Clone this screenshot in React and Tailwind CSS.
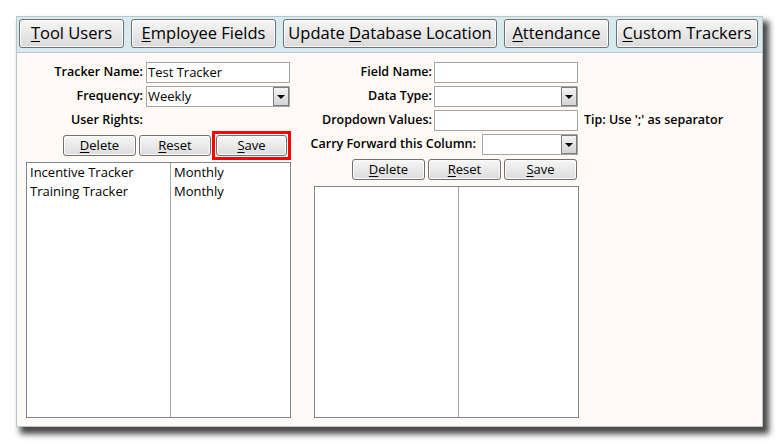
const tabs = [
  { key: 'T', rest: 'ool Users', w: 'w-[105px]' },
  { key: 'E', rest: 'mployee Fields', w: 'w-[145px]' },
  { pre: 'Update ', key: 'D', rest: 'atabase Location', w: 'w-[214px]' },
  { key: 'A', rest: 'ttendance', w: 'w-[105px]' },
  { key: 'C', rest: 'ustom Trackers', w: 'w-[142px]' },
]

function Btn({ k, rest, className = '' }) {
  return (
    <button
      className={`h-[21px] flex items-center justify-center rounded-[3px] border border-[#707070] bg-gradient-to-b from-[#f7f7f7] to-[#dcdcdc] shadow-[inset_0_0_0_1px_#fbfbfb] text-[13px] text-black ${className}`}
    >
      <span>
        <span className="underline underline-offset-2">{k}</span>
        {rest}
      </span>
    </button>
  )
}

function Input({ w = 'w-[144px]', value }) {
  return (
    <div className={`${w} h-[21px] bg-white border border-[#a5a5a5] flex items-center pl-[1px] text-[13px] text-black`}>
      {value}
    </div>
  )
}

function Select({ w = 'w-[144px]', value }) {
  return (
    <div className={`${w} h-[21px] bg-white border border-[#a5a5a5] flex items-center text-[13px] text-black`}>
      <span className="flex-1 pl-[1px]">{value}</span>
      <span className="w-[16px] h-full flex items-center justify-center border border-[#7d7d7d] bg-gradient-to-b from-[#f3f3f3] to-[#d4d4d4]">
        <span className="w-0 h-0 border-l-[4px] border-r-[4px] border-t-[4px] border-l-transparent border-r-transparent border-t-black" />
      </span>
    </div>
  )
}

function Label({ children, className = '' }) {
  return <span className={`text-[12.5px] font-semibold text-black whitespace-nowrap ${className}`}>{children}</span>
}

function ListBox({ h, rows = [] }) {
  return (
    <div className={`w-[265px] ${h} bg-white border border-[#7f858f] flex text-[13px] text-black`}>
      <div className="w-[144px] border-r border-[#a8a8a8] pl-[3px]">
        {rows.map((r) => (
          <div key={r[0]} className="h-[19px] leading-[19px]">{r[0]}</div>
        ))}
      </div>
      <div className="flex-1 pl-[3px]">
        {rows.map((r) => (
          <div key={r[0]} className="h-[19px] leading-[19px]">{r[1]}</div>
        ))}
      </div>
    </div>
  )
}

export default function App() {
  return (
    <div className="w-[780px] h-[444px] bg-white pt-[16px] pl-[16px] font-['Open_Sans',sans-serif]">
      <div className="w-[747px] h-[411px] bg-[#fffaf6] border border-[#b4c8ce] shadow-[5px_6px_6px_1px_rgba(0,0,0,0.72)] flex flex-col">
        <div className="h-[36px] bg-[#d6eaf0] border-b border-[#b3cbd2] flex gap-[7px] pl-[2px] pt-[2px]">
          {tabs.map((t) => (
            <button
              key={t.rest}
              className={`${t.w} h-[29px] flex items-center justify-center rounded-[3px] border border-[#707070] bg-gradient-to-b from-[#f6f6f6] to-[#dadada] shadow-[inset_0_0_0_1px_#fbfbfb] text-[16.5px] text-black`}
            >
              <span className="whitespace-pre">
                {t.pre}
                <span className="underline underline-offset-2">{t.key}</span>
                {t.rest}
              </span>
            </button>
          ))}
        </div>

        <div className="flex pl-[9px] pt-[9px]">
          {/* left column */}
          <div className="w-[265px] flex flex-col">
            <div className="flex flex-col gap-[3px]">
              <div className="flex items-center h-[21px]">
                <Label className="w-[120px] text-right pr-[3px]">Tracker Name:</Label>
                <Input value="Test Tracker" />
              </div>
              <div className="flex items-center h-[21px]">
                <Label className="w-[120px] text-right pr-[3px]">Frequency:</Label>
                <Select value="Weekly" />
              </div>
              <div className="flex items-center h-[21px]">
                <Label className="w-[120px] text-right pr-[3px]">User Rights:</Label>
              </div>
            </div>
            <div className="flex mt-[4px] pl-[37px] gap-[3px]">
              <Btn className="w-[73px]" k="D" rest="elete" />
              <Btn className="w-[72px]" k="R" rest="eset" />
              <div className="ml-[2px] outline outline-[3px] outline-[#ff0000] outline-offset-[1px]">
                <Btn className="w-[71px] border-[#3c7fb1]" k="S" rest="ave" />
              </div>
            </div>
            <div className="mt-[6px]">
              <ListBox
                h="h-[256px]"
                rows={[
                  ['Incentive Tracker', 'Monthly'],
                  ['Training Tracker', 'Monthly'],
                ]}
              />
            </div>
          </div>

          {/* right column */}
          <div className="ml-[9px] flex flex-col">
            <div className="flex flex-col gap-[3px]">
              <div className="w-[278px] h-[21px] flex items-center justify-end gap-[2px]">
                <Label>Field Name:</Label>
                <Input />
              </div>
              <div className="w-[278px] h-[21px] flex items-center justify-end gap-[2px]">
                <Label>Data Type:</Label>
                <Select />
              </div>
              <div className="flex items-center h-[21px]">
                <div className="w-[278px] flex items-center justify-end gap-[2px]">
                  <Label>Dropdown Values:</Label>
                  <Input />
                </div>
                <Label className="ml-[6px]">Tip: Use ';' as separator</Label>
              </div>
              <div className="w-[278px] h-[21px] flex items-center justify-end gap-[6px]">
                <Label>Carry Forward this Column:</Label>
                <Select w="w-[96px]" />
              </div>
            </div>
            <div className="flex mt-[4px] pl-[52px] gap-[3px]">
              <Btn className="w-[73px]" k="D" rest="elete" />
              <Btn className="w-[73px]" k="R" rest="eset" />
              <Btn className="w-[73px]" k="S" rest="ave" />
            </div>
            <div className="mt-[6px] ml-[14px]">
              <ListBox h="h-[232px]" />
            </div>
          </div>
        </div>
      </div>
    </div>
  )
}
